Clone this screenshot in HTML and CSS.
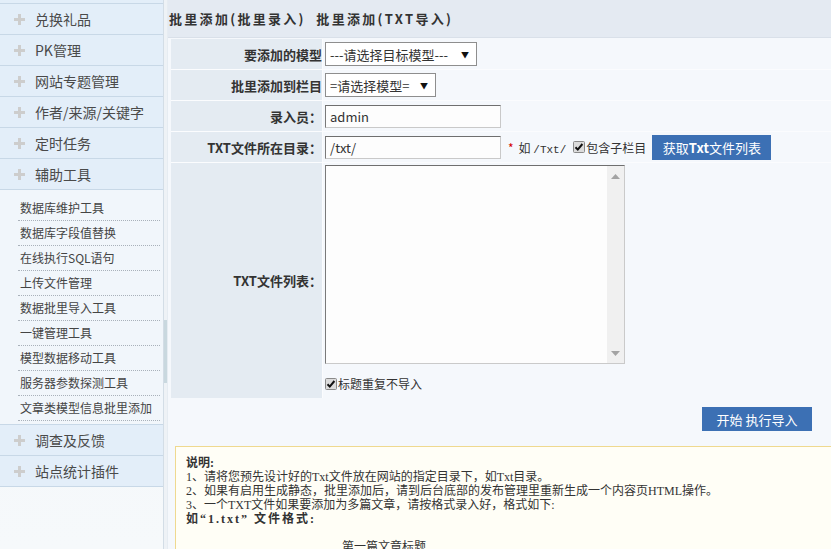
FILE: index.html
```html
<!DOCTYPE html>
<html lang="zh-CN">
<head>
<meta charset="utf-8">
<title>批里添加</title>
<link rel="stylesheet" href="styles.css">
</head>
<body>
<div class="page">
  <aside class="sidebar">
    <div class="cut"></div>
    <div class="mhead"><svg class="plus" width="11" height="11" viewBox="0 0 11 11"><path d="M4 0h3v11H4zM0 4h11v3H0z" fill="#cdcdcd"/></svg><span>兑换礼品</span></div>
    <div class="mhead"><svg class="plus" width="11" height="11" viewBox="0 0 11 11"><path d="M4 0h3v11H4zM0 4h11v3H0z" fill="#cdcdcd"/></svg><span>PK管理</span></div>
    <div class="mhead"><svg class="plus" width="11" height="11" viewBox="0 0 11 11"><path d="M4 0h3v11H4zM0 4h11v3H0z" fill="#cdcdcd"/></svg><span>网站专题管理</span></div>
    <div class="mhead"><svg class="plus" width="11" height="11" viewBox="0 0 11 11"><path d="M4 0h3v11H4zM0 4h11v3H0z" fill="#cdcdcd"/></svg><span>作者/来源/关键字</span></div>
    <div class="mhead"><svg class="plus" width="11" height="11" viewBox="0 0 11 11"><path d="M4 0h3v11H4zM0 4h11v3H0z" fill="#cdcdcd"/></svg><span>定时任务</span></div>
    <div class="mhead"><svg class="plus" width="11" height="11" viewBox="0 0 11 11"><path d="M4 0h3v11H4zM0 4h11v3H0z" fill="#cdcdcd"/></svg><span>辅助工具</span></div>
    <ul class="sub">
      <li>数据库维护工具</li>
      <li>数据库字段值替换</li>
      <li>在线执行SQL语句</li>
      <li>上传文件管理</li>
      <li>数据批里导入工具</li>
      <li>一键管理工具</li>
      <li>模型数据移动工具</li>
      <li>服务器参数探测工具</li>
      <li>文章类模型信息批里添加</li>
    </ul>
    <div class="mhead"><svg class="plus" width="11" height="11" viewBox="0 0 11 11"><path d="M4 0h3v11H4zM0 4h11v3H0z" fill="#cdcdcd"/></svg><span>调查及反馈</span></div>
    <div class="mhead"><svg class="plus" width="11" height="11" viewBox="0 0 11 11"><path d="M4 0h3v11H4zM0 4h11v3H0z" fill="#cdcdcd"/></svg><span>站点统计插件</span></div>
  </aside>
  <div class="track"><div class="thumb"></div></div>
  <main class="main">
    <div class="title">批里添加(批里录入)&nbsp; 批里添加(TXT导入)</div>
    <div class="content">
      <div class="form">
        <div class="lbl">要添加的模型</div>
        <div class="val"><div class="sel sel1"><span>---请选择目标模型---</span><span class="arr">▼</span></div></div>

        <div class="lbl">批里添加到栏目</div>
        <div class="val"><div class="sel sel2"><span>=请选择模型=</span><span class="arr">▼</span></div></div>

        <div class="lbl">录入员：</div>
        <div class="val"><div class="inp">admin</div></div>

        <div class="lbl">TXT文件所在目录：</div>
        <div class="val">
          <div class="inp">/txt/</div>
          <span class="req">*</span>
          <span class="hint">如 <span class="mono">/Txt/</span></span>
          <span class="chk"><svg width="12" height="12" viewBox="0 0 12 12"><rect x="0.5" y="0.5" width="11" height="11" rx="1" fill="#dcdcdc" stroke="#8a8a8a"/><path d="M2.5 6.2l2.3 2.4 4.6-5.6" fill="none" stroke="#111" stroke-width="2"/></svg>包含子栏目</span>
          <button class="btn btn-get">获取<b>Txt</b>文件列表</button>
        </div>

        <div class="lbl">TXT文件列表：</div>
        <div class="val val-col">
          <div class="ta">
            <div class="ta-body"></div>
            <div class="ta-scroll">
              <svg width="9" height="5" viewBox="0 0 9 5"><path d="M0 5L4.5 0 9 5z" fill="#a3a3a3"/></svg>
              <svg width="9" height="5" viewBox="0 0 9 5"><path d="M0 0h9L4.5 5z" fill="#a3a3a3"/></svg>
            </div>
          </div>
          <span class="chk chk2"><svg width="12" height="12" viewBox="0 0 12 12"><rect x="0.5" y="0.5" width="11" height="11" rx="1" fill="#dcdcdc" stroke="#8a8a8a"/><path d="M2.5 6.2l2.3 2.4 4.6-5.6" fill="none" stroke="#111" stroke-width="2"/></svg>标题重复不导入</span>
        </div>
      </div>
      <div class="actions"><button class="btn btn-go">开始 执行导入</button></div>
      <div class="note">
        <p class="b">说明:</p>
        <p>1、请将您预先设计好的Txt文件放在网站的指定目录下，如Txt目录。</p>
        <p>2、如果有启用生成静态，批里添加后，请到后台底部的发布管理里重新生成一个内容页HTML操作。</p>
        <p>3、一个TXT文件如果要添加为多篇文章，请按格式录入好，格式如下:</p>
        <p class="b wide">如“1.txt” 文件格式:</p>
        <p>&nbsp;</p>
        <p class="ind">第一篇文章标题</p>
      </div>
    </div>
  </main>
</div>
</body>
</html>
```

FILE: styles.css
```css
* { box-sizing: border-box; }
html, body { margin: 0; padding: 0; }
body {
  font-family: "Noto Sans CJK SC", "Noto Sans", sans-serif;
  color: #333;
  background: #f5f8fc;
}
.page {
  display: flex;
  width: 831px;
  height: 549px;
  overflow: hidden;
}

/* sidebar */
.sidebar {
  width: 163px;
  flex: none;
  background: linear-gradient(#f1f5f9, #f6f9fb);
}
.cut {
  height: 4px;
  background: #e3eef9;
  border-bottom: 1px solid #c8d8e7;
}
.mhead {
  display: flex;
  align-items: center;
  gap: 10px;
  height: 31px;
  padding-left: 14px;
  background: #e3eef9;
  border-bottom: 1px solid #c8d8e7;
  font-size: 14px;
  color: #4a4a4a;
}
.plus { flex: none; }
.sub {
  list-style: none;
  margin: 0;
  padding: 6px 0 3px;
  background: #f1f6fb;
  border-bottom: 1px solid #c8d8e7;
}
.sub li {
  margin: 0 3px 0 18px;
  padding-left: 2px;
  height: 25px;
  line-height: 24px;
  font-size: 12px;
  color: #444;
  border-bottom: 1px dotted #a9b1ba;
}
.track {
  width: 5px;
  flex: none;
  background: #eef2f6;
  border-left: 1px solid #d3dde6;
  border-right: 1px solid #e6ecf2;
}
.thumb {
  margin-top: 320px;
  height: 63px;
  background: #c9d8df;
}

/* main */
.main {
  flex: 1;
  min-width: 0;
  background: #f5f8fc;
}
.title {
  height: 38px;
  line-height: 37px;
  padding-left: 1px;
  background: #e4eaf2;
  border-bottom: 1px solid #d9e0e9;
  font-size: 13px;
  font-weight: 700;
  letter-spacing: 2.3px;
  color: #333;
  white-space: nowrap;
}
.content {
  padding: 1px 0 0 3px;
}
.form {
  display: grid;
  grid-template-columns: 151px 1fr;
  grid-template-rows: 30px 30px 30px 30px 235px;
  gap: 1px;
  background: #fbfcfe;
}
.lbl {
  background: #e4ebf2;
  display: flex;
  align-items: center;
  justify-content: flex-end;
  font-size: 13px;
  font-weight: 700;
  color: #333;
  white-space: nowrap;
}
.val {
  background: #f5f8fc;
  display: flex;
  align-items: center;
  padding-left: 2px;
  white-space: nowrap;
}
.val-col {
  flex-direction: column;
  align-items: flex-start;
  justify-content: flex-start;
  padding-top: 2px;
}
.sel {
  display: flex;
  align-items: center;
  height: 24px;
  background: #fff;
  border: 1px solid #8e8e8e;
  padding: 0 7px 0 4px;
  font-size: 13px;
  color: #333;
}
.sel1 { width: 152px; }
.sel2 { width: 111px; }
.arr {
  margin-left: auto;
  font-size: 8px;
  color: #111;
}
.inp {
  width: 176px;
  height: 23px;
  display: flex;
  align-items: center;
  padding-left: 4px;
  background: #fdfdfd;
  border: 1px solid #c9c9c9;
  border-top-color: #6f6f6f;
  border-left-color: #7a7a7a;
  font-size: 13px;
  color: #333;
}
.req {
  color: #d40000;
  font-size: 12px;
  margin-left: 7px;
}
.hint {
  font-size: 12px;
  margin-left: 5px;
  color: #333;
}
.mono {
  font-family: "Liberation Mono", monospace;
  font-size: 11px;
}
.chk {
  display: inline-flex;
  align-items: center;
  font-size: 12px;
  color: #333;
  margin-left: 7px;
}
.chk svg { margin-right: 1px; }
.btn {
  border: 0;
  background: #3c70b4;
  color: #fff;
  font-family: "Noto Sans CJK SC", sans-serif;
  font-size: 13px;
  padding: 0;
  cursor: pointer;
}
.btn-get {
  width: 119px;
  height: 25px;
  margin-left: 6px;
}
.ta {
  display: flex;
  width: 300px;
  height: 199px;
  background: #fdfdfd;
  border: 1px solid #cacaca;
  border-top-color: #6f6f6f;
  border-left-color: #7a7a7a;
}
.ta-body { flex: 1; }
.ta-scroll {
  width: 17px;
  background: #f0f0f0;
  display: flex;
  flex-direction: column;
  align-items: center;
  justify-content: space-between;
  padding: 8px 0 7px;
}
.chk2 {
  margin: 11px 0 0 0;
}
.actions {
  display: flex;
  justify-content: flex-end;
  padding: 9px 19px 9px 0;
}
.btn-go {
  width: 110px;
  height: 24px;
}
.note {
  margin: 6px 0 0 4px;
  padding: 9px 0 0 10px;
  background: #fffef6;
  border: 1px solid #efd98f;
  border-right: 0;
  height: 200px;
}
.note p {
  margin: 0;
  font-family: "Liberation Serif", "Noto Sans CJK SC", serif;
  font-size: 12px;
  line-height: 14px;
  height: 14px;
  color: #333;
  white-space: nowrap;
}
.note .b { font-weight: 700; }
.note .wide { letter-spacing: 2px; }
.note .ind { padding-left: 156px; }
```
